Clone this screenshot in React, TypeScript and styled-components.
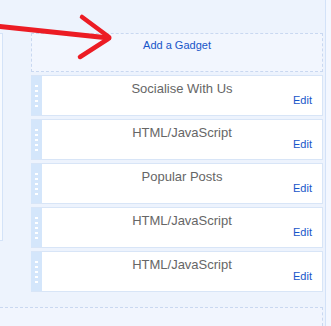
import React from 'react';
import styled, { createGlobalStyle } from 'styled-components';

const GlobalStyle = createGlobalStyle`
    html, body {
        margin: 0;
        padding: 0;
        background: #f3f7ff;
        font-family: "Liberation Sans", Arial, sans-serif;
    }
`;

const Frame = styled.div`
    position: relative;
    width: 326px;
    height: 326px;
    box-sizing: border-box;
    border-right: 1px solid #d3e2f8;
    background: #edf3fd;
    display: flex;
    flex-direction: column;
    overflow: hidden;
`;

const Columns = styled.div`
    display: flex;
    align-items: flex-start;
    padding-top: 33px;
`;

const LeftPanel = styled.div`
    width: 2px;
    height: 206px;
    background: #f7faff;
    border: 1px solid #d4e3f8;
    border-left: none;
`;

const Sidebar = styled.div`
    margin-left: 28px;
    width: 292px;
    display: flex;
    flex-direction: column;
`;

const AddGadget = styled.div`
    height: 39px;
    box-sizing: border-box;
    padding-top: 5px;
    border: 1px dashed #c9d8f1;
    background: #f2f6fe;
    text-align: center;
    font-size: 11px;
    line-height: 13px;
    color: #1755c9;
`;

const GadgetList = styled.div`
    display: flex;
    flex-direction: column;
    gap: 3px;
    margin-top: 3px;
`;

const Gadget = styled.div`
    display: flex;
    height: 41px;
    box-sizing: border-box;
    background: #fff;
    border: 1px solid #d8e5f7;
    border-left-color: #d4e6fb;
`;

const Handle = styled.div`
    width: 10px;
    background: #d4e6fb;
    display: flex;
    flex-direction: column;
    gap: 3px;
    padding: 9px 0 0 3px;
    box-sizing: border-box;
`;

const Dot = styled.span`
    width: 3px;
    height: 2px;
    background: #fff;
`;

const GadgetBody = styled.div`
    flex: 1;
    display: flex;
    flex-direction: column;
    padding-top: 5px;
`;

const Title = styled.div`
    text-align: center;
    font-size: 13px;
    line-height: 16px;
    color: #666;
`;

const EditLink = styled.span`
    align-self: flex-end;
    margin: -3px 10px 0 0;
    font-size: 11px;
    line-height: 13px;
    color: #1755c9;
`;

const Footer = styled.div`
    flex: 1;
    margin-top: 15px;
    width: 323px;
    box-sizing: border-box;
    border-top: 1px dashed #c9d8f1;
    border-right: 1px dashed #c9d8f1;
    background: #f1f5fe;
`;

const Arrow = styled.svg`
    position: absolute;
    top: 0;
    left: 0;
    pointer-events: none;
`;

const gadgets = ['Socialise With Us', 'HTML/JavaScript', 'Popular Posts', 'HTML/JavaScript', 'HTML/JavaScript'];

export default function App() {
    return (
        <>
            <GlobalStyle />
            <Frame>
                <Columns>
                    <LeftPanel />
                    <Sidebar>
                        <AddGadget>Add a Gadget</AddGadget>
                        <GadgetList>
                            {gadgets.map((title, i) => (
                                <Gadget key={i}>
                                    <Handle>
                                        {[0, 1, 2, 3, 4].map(d => <Dot key={d} />)}
                                    </Handle>
                                    <GadgetBody>
                                        <Title>{title}</Title>
                                        <EditLink>Edit</EditLink>
                                    </GadgetBody>
                                </Gadget>
                            ))}
                        </GadgetList>
                    </Sidebar>
                </Columns>
                <Footer />
                <Arrow width="120" height="65" viewBox="0 0 120 65">
                    <g stroke="#ec1c24" strokeLinecap="round" fill="none">
                        <line x1="-4" y1="26" x2="109" y2="38" strokeWidth="5" />
                        <line x1="82" y1="17" x2="109" y2="37" strokeWidth="4.5" />
                        <line x1="80" y1="57" x2="108" y2="39" strokeWidth="4.5" />
                    </g>
                </Arrow>
            </Frame>
        </>
    );
}
